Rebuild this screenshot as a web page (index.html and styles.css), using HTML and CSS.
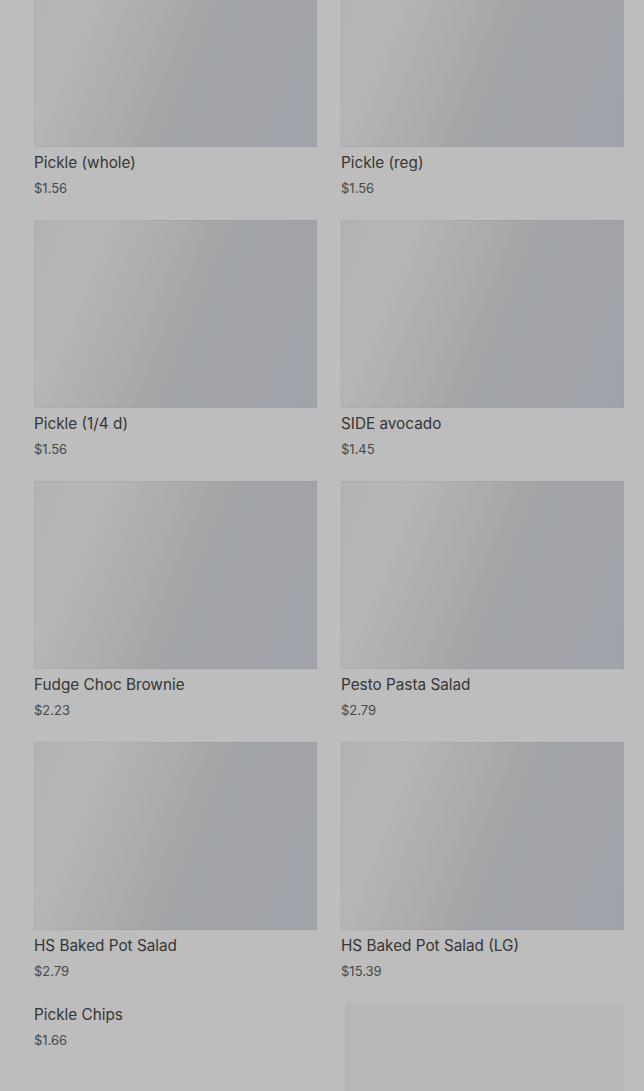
FILE: index.html
```html
<!DOCTYPE html>
<html lang="en">
<head>
    <meta charset="UTF-8">
    <meta name="viewport" content="width=device-width, initial-scale=1.0">
    <title>Menu - Sides</title>
    <link rel="stylesheet" href="styles.css">
</head>
<body>
    <div class="menu">
        <div class="menu-grid">
            <div class="item">
                <div class="item-photo"></div>
                <div class="item-info">
                    <div class="item-name">Pickle (whole)</div>
                    <div class="item-price">$1.56</div>
                </div>
            </div>
            <div class="item">
                <div class="item-photo"></div>
                <div class="item-info">
                    <div class="item-name">Pickle (reg)</div>
                    <div class="item-price">$1.56</div>
                </div>
            </div>
            <div class="item">
                <div class="item-photo"></div>
                <div class="item-info">
                    <div class="item-name">Pickle (1/4 d)</div>
                    <div class="item-price">$1.56</div>
                </div>
            </div>
            <div class="item">
                <div class="item-photo"></div>
                <div class="item-info">
                    <div class="item-name">SIDE avocado</div>
                    <div class="item-price">$1.45</div>
                </div>
            </div>
            <div class="item">
                <div class="item-photo"></div>
                <div class="item-info">
                    <div class="item-name">Fudge Choc Brownie</div>
                    <div class="item-price">$2.23</div>
                </div>
            </div>
            <div class="item">
                <div class="item-photo"></div>
                <div class="item-info">
                    <div class="item-name">Pesto Pasta Salad</div>
                    <div class="item-price">$2.79</div>
                </div>
            </div>
            <div class="item">
                <div class="item-photo"></div>
                <div class="item-info">
                    <div class="item-name">HS Baked Pot Salad</div>
                    <div class="item-price">$2.79</div>
                </div>
            </div>
            <div class="item">
                <div class="item-photo"></div>
                <div class="item-info">
                    <div class="item-name">HS Baked Pot Salad (LG)</div>
                    <div class="item-price">$15.39</div>
                </div>
            </div>
            <div class="item no-photo">
                <div class="item-info">
                    <div class="item-name">Pickle Chips</div>
                    <div class="item-price">$1.66</div>
                </div>
            </div>
            <div class="item">
                <div class="item-loading"></div>
            </div>
        </div>
    </div>

    <!-- modal backdrop -->
    <div class="backdrop"></div>
</body>
</html>
```

FILE: styles.css
```css
html, body {
    height: 100%;
    overflow: hidden;
}
body {
    margin: 0;
    background: #ffffff;
    font-family: Inter, "Noto Sans", sans-serif;
    color: #4e4e4e;
}
.menu {
    padding: 0 20px 0 34px;
    margin-top: -41px;
}
.menu-grid {
    display: grid;
    grid-template-columns: 1fr 1fr;
    column-gap: 24px;
    row-gap: 0;
}
.item {
    height: 261px;
}
.item-photo {
    height: 188px;
    background: linear-gradient(112deg, #f1f1f1 0%, #f6f6f6 18%, #eaeaea 38%, #e2e2e2 50%, #dadde4 60%, #d8dce5 100%);
    box-shadow: inset 0 0 0 1px rgba(0, 0, 0, 0.03);
}
.item-info {
    padding-top: 4px;
}
.no-photo .item-info {
    padding-top: 0;
}
.item-name {
    font-size: 15.3px;
    line-height: 24px;
    color: #4a4a4a;
}
.item-price {
    font-size: 13px;
    line-height: 20px;
    margin-top: 3px;
    color: #626262;
}
.item-loading {
    margin: 0 0 0 4px;
    height: 260px;
    background: #fafafa;
    border: 1px solid #f6f6f6;
    border-width: 1px 0 0 6px;
}
.backdrop {
    position: fixed;
    inset: 0;
    background: rgba(0, 0, 0, 0.26);
}
```
